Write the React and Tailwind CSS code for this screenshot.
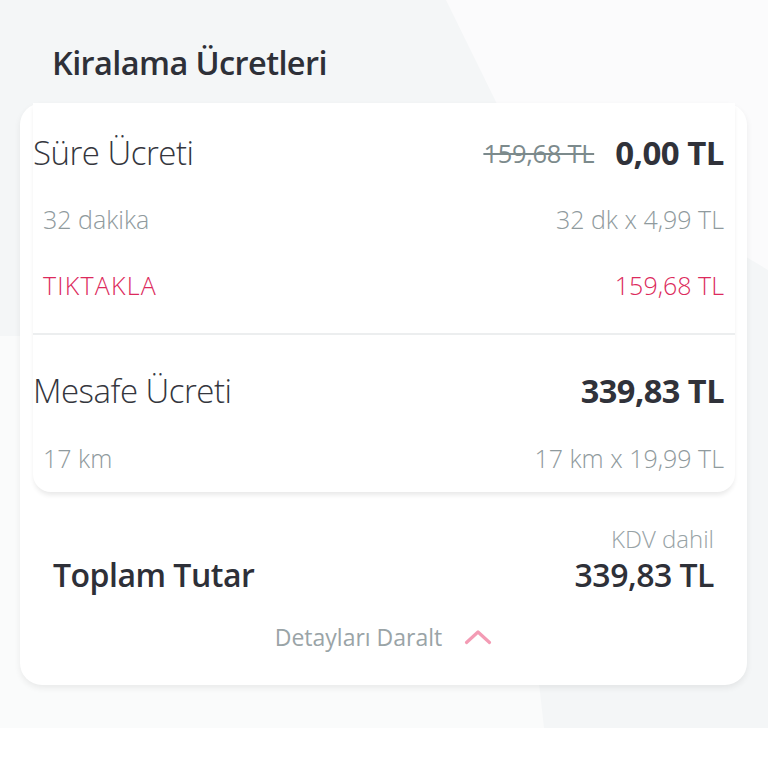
import React from "react"

// ── Fee rows ────────────────────────────────────────────────────────────────
const detailText = "text-[25px] font-light text-[#8f9a9d]"

function MainRow({ label, children, className = "" }) {
  return (
    <div className={`flex items-center justify-between ${className}`}>
      <span className="text-[33px] font-light text-[#34363d] tracking-[-0.5px]">{label}</span>
      <div className="flex items-center gap-[21px] pr-[11px]">{children}</div>
    </div>
  )
}

function SubRow({ left, right, className = "", tone = detailText, leftTone }) {
  return (
    <div className={`flex items-center justify-between pl-[10px] pr-[11px] ${className}`}>
      <span className={leftTone || tone}>{left}</span>
      <span className={tone}>{right}</span>
    </div>
  )
}

export default function App() {
  return (
    <div className="w-[768px] h-[768px] bg-white font-['Open_Sans','Noto_Sans',sans-serif]">
      <div className="relative h-[728px] bg-[#f4f6f7] overflow-hidden">
        {/* soft background shapes */}
        <div className="absolute inset-0 bg-[#fbfbfc] [clip-path:polygon(446px_0,768px_0,768px_270px,500px_110px)]" />
        <div className="absolute inset-0 bg-[#fafbfb] [clip-path:polygon(0_336px,500px_336px,544px_728px,0_728px)]" />

        <div className="relative">
          <h1 className="pt-[40px] pl-[52px] h-[103px] text-[32.5px] font-semibold text-[#2e3038] tracking-[-0.6px] leading-[46px]">
            Kiralama Ücretleri
          </h1>

          {/* ── Outer card ── */}
          <div className="ml-[20px] w-[727px] h-[582px] bg-white rounded-[22px] shadow-[0_3px_6px_rgba(0,0,0,0.07)]">
            {/* ── Inner card ── */}
            <div className="ml-[13px] w-[702px] rounded-b-[18px] bg-white shadow-[0_4px_5px_-1px_rgba(0,0,0,0.09)] pt-[17px]">
              <MainRow label="Süre Ücreti" className="h-[66px]">
                <span className="text-[25.5px] text-[#7c8a8c] line-through decoration-[1.5px] tracking-[-0.3px]">159,68 TL</span>
                <span className="text-[33px] font-bold text-[#30323a] tracking-[-0.5px]">0,00 TL</span>
              </MainRow>
              <SubRow left="32 dakika" right="32 dk x 4,99 TL" className="h-[68px]" />
              <SubRow
                left="TIKTAKLA"
                right="159,68 TL"
                className="h-[64px]"
                tone="text-[25px] font-light text-[#dc2a5c]"
                leftTone="text-[25px] font-light text-[#dc2a5c] tracking-[1.2px]"
              />
              <div className="mt-[15px] h-[2px] bg-[#eceeef]" />
              <MainRow label="Mesafe Ücreti" className="mt-[21px] h-[70px]">
                <span className="text-[32.5px] font-bold text-[#30323a] tracking-[-0.5px]">339,83 TL</span>
              </MainRow>
              <SubRow left="17 km" right="17 km x 19,99 TL" className="h-[66px]" />
            </div>

            {/* ── Total ── */}
            <div className="px-[33px] pt-[36px]">
              <div className="flex justify-end h-[22px] items-center">
                <span className="text-[24px] font-light text-[#98a3a6]">KDV dahil</span>
              </div>
              <div className="flex justify-between items-center h-[38px] mt-[6px]">
                <span className="text-[32px] font-semibold text-[#2e3038] tracking-[-0.5px]">Toplam Tutar</span>
                <span className="text-[32px] font-semibold text-[#2e3038] tracking-[-0.5px]">339,83 TL</span>
              </div>
              <div className="flex justify-center items-center gap-[22px] mt-[31px] h-[24px]">
                <span className="text-[23px] text-[#9aa4a7]">Detayları Daralt</span>
                <svg width="28" height="16" viewBox="0 0 28 16" fill="none">
                  <path d="M2.5 13.5 L14 3 L25.5 13.5" stroke="#f39bb4" strokeWidth="3.2" strokeLinecap="round" strokeLinejoin="round" />
                </svg>
              </div>
            </div>
          </div>
        </div>
      </div>
    </div>
  )
}
